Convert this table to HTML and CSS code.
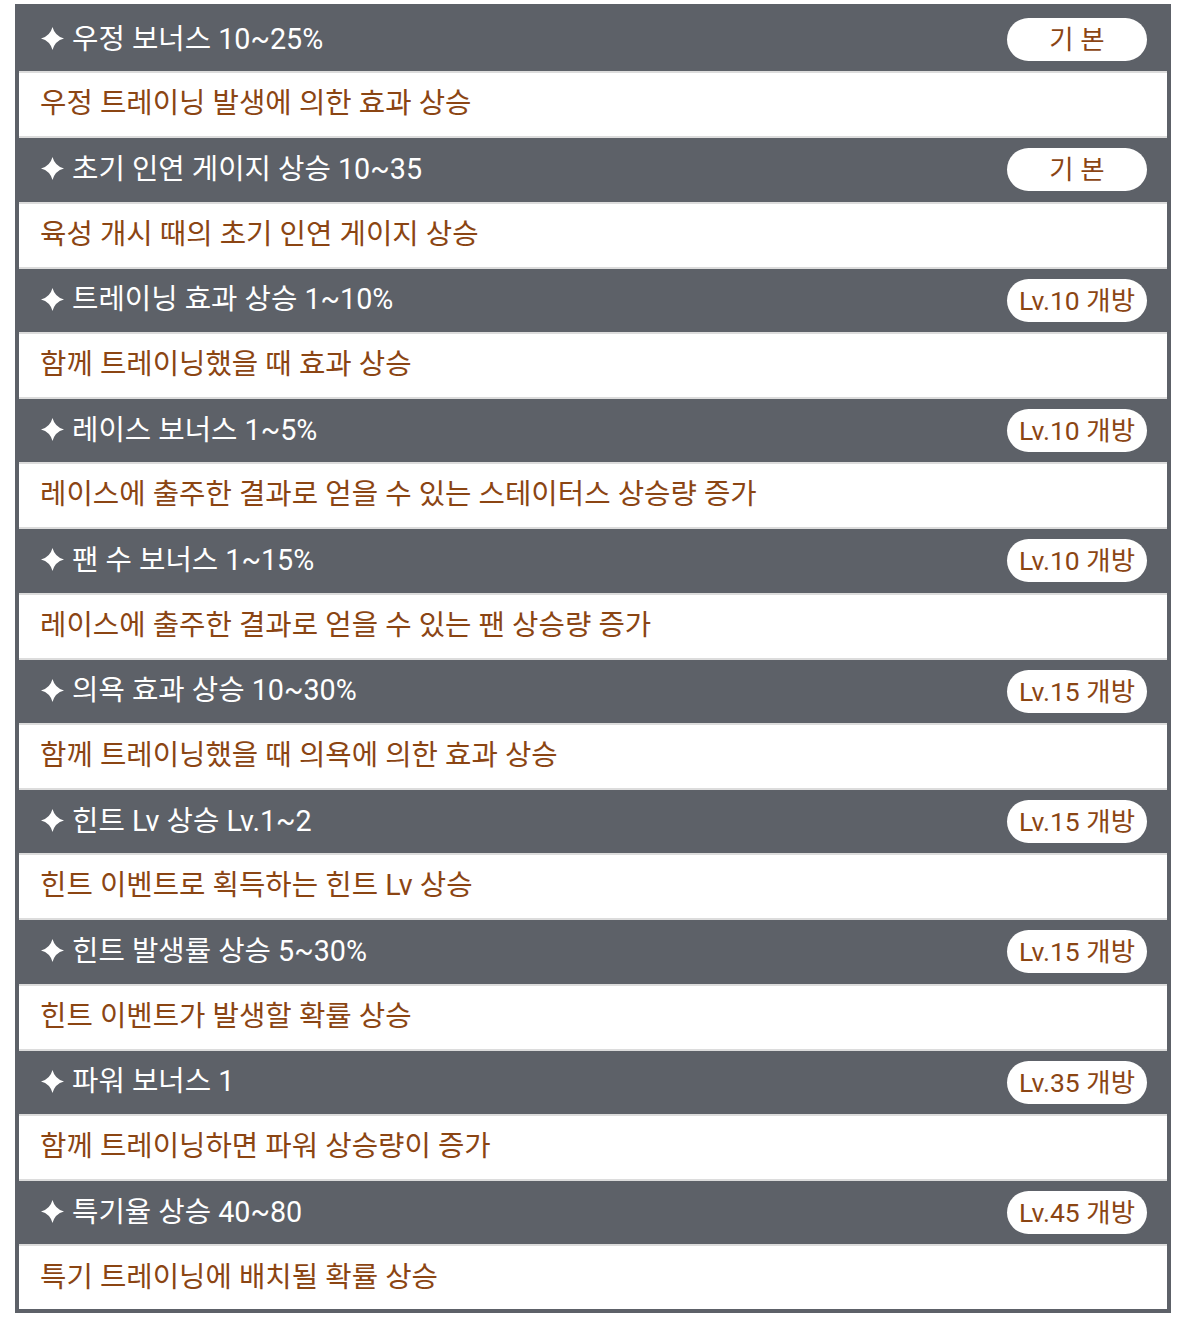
FILE: index.html
```html
<!DOCTYPE html>
<html lang="ko">
<head>
<meta charset="utf-8">
<title>서포트 효과</title>
<link rel="stylesheet" href="styles.css">
</head>
<body>
<div class="panel">
  <div class="head"><div class="title"><svg class="star" viewBox="0 0 24 24"><path d="M12 0Q14.5 9.5 24 12Q14.5 14.5 12 24Q9.5 14.5 0 12Q9.5 9.5 12 0Z"/></svg><span>우정 보너스 10~25%</span></div><span class="badge">기 본</span></div>
  <div class="desc">우정 트레이닝 발생에 의한 효과 상승</div>
  <div class="head"><div class="title"><svg class="star" viewBox="0 0 24 24"><path d="M12 0Q14.5 9.5 24 12Q14.5 14.5 12 24Q9.5 14.5 0 12Q9.5 9.5 12 0Z"/></svg><span>초기 인연 게이지 상승 10~35</span></div><span class="badge">기 본</span></div>
  <div class="desc">육성 개시 때의 초기 인연 게이지 상승</div>
  <div class="head"><div class="title"><svg class="star" viewBox="0 0 24 24"><path d="M12 0Q14.5 9.5 24 12Q14.5 14.5 12 24Q9.5 14.5 0 12Q9.5 9.5 12 0Z"/></svg><span>트레이닝 효과 상승 1~10%</span></div><span class="badge">Lv.10 개방</span></div>
  <div class="desc">함께 트레이닝했을 때 효과 상승</div>
  <div class="head"><div class="title"><svg class="star" viewBox="0 0 24 24"><path d="M12 0Q14.5 9.5 24 12Q14.5 14.5 12 24Q9.5 14.5 0 12Q9.5 9.5 12 0Z"/></svg><span>레이스 보너스 1~5%</span></div><span class="badge">Lv.10 개방</span></div>
  <div class="desc">레이스에 출주한 결과로 얻을 수 있는 스테이터스 상승량 증가</div>
  <div class="head"><div class="title"><svg class="star" viewBox="0 0 24 24"><path d="M12 0Q14.5 9.5 24 12Q14.5 14.5 12 24Q9.5 14.5 0 12Q9.5 9.5 12 0Z"/></svg><span>팬 수 보너스 1~15%</span></div><span class="badge">Lv.10 개방</span></div>
  <div class="desc">레이스에 출주한 결과로 얻을 수 있는 팬 상승량 증가</div>
  <div class="head"><div class="title"><svg class="star" viewBox="0 0 24 24"><path d="M12 0Q14.5 9.5 24 12Q14.5 14.5 12 24Q9.5 14.5 0 12Q9.5 9.5 12 0Z"/></svg><span>의욕 효과 상승 10~30%</span></div><span class="badge">Lv.15 개방</span></div>
  <div class="desc">함께 트레이닝했을 때 의욕에 의한 효과 상승</div>
  <div class="head"><div class="title"><svg class="star" viewBox="0 0 24 24"><path d="M12 0Q14.5 9.5 24 12Q14.5 14.5 12 24Q9.5 14.5 0 12Q9.5 9.5 12 0Z"/></svg><span>힌트 Lv 상승 Lv.1~2</span></div><span class="badge">Lv.15 개방</span></div>
  <div class="desc">힌트 이벤트로 획득하는 힌트 Lv 상승</div>
  <div class="head"><div class="title"><svg class="star" viewBox="0 0 24 24"><path d="M12 0Q14.5 9.5 24 12Q14.5 14.5 12 24Q9.5 14.5 0 12Q9.5 9.5 12 0Z"/></svg><span>힌트 발생률 상승 5~30%</span></div><span class="badge">Lv.15 개방</span></div>
  <div class="desc">힌트 이벤트가 발생할 확률 상승</div>
  <div class="head"><div class="title"><svg class="star" viewBox="0 0 24 24"><path d="M12 0Q14.5 9.5 24 12Q14.5 14.5 12 24Q9.5 14.5 0 12Q9.5 9.5 12 0Z"/></svg><span>파워 보너스 1</span></div><span class="badge">Lv.35 개방</span></div>
  <div class="desc">함께 트레이닝하면 파워 상승량이 증가</div>
  <div class="head"><div class="title"><svg class="star" viewBox="0 0 24 24"><path d="M12 0Q14.5 9.5 24 12Q14.5 14.5 12 24Q9.5 14.5 0 12Q9.5 9.5 12 0Z"/></svg><span>특기율 상승 40~80</span></div><span class="badge">Lv.45 개방</span></div>
  <div class="desc">특기 트레이닝에 배치될 확률 상승</div>
</div>
</body>
</html>
```

FILE: styles.css
```css
html, body {
  margin: 0;
  padding: 0;
  background: #ffffff;
}
body {
  padding: 4px 13px 0 15px;
  font-family: Roboto, "Noto Sans CJK KR", sans-serif;
}
.panel {
  border: 4px solid #5d6168;
  background: #5d6168;
  display: flex;
  flex-direction: column;
}
.head {
  height: 63.33px;
  box-sizing: border-box;
  display: flex;
  align-items: center;
  justify-content: space-between;
  padding: 0 20px 7px 22px;
  color: #ffffff;
  font-size: 28.7px;
}
.title {
  display: flex;
  align-items: center;
  gap: 8px;
}
.star {
  width: 23px;
  height: 23px;
  fill: #ffffff;
  flex: none;
  margin-top: 5px;
}
.badge {
  width: 140px;
  height: 43px;
  border-radius: 22px;
  background: #ffffff;
  color: #8b4513;
  font-size: 26.5px;
  display: flex;
  align-items: center;
  justify-content: center;
  box-sizing: border-box;
  padding-bottom: 4px;
  margin-top: 7px;
}
.desc {
  height: 67px;
  box-sizing: border-box;
  background: #ffffff;
  border-top: 2px solid #dcdcdc;
  border-bottom: 2px solid #dcdcdc;
  display: flex;
  align-items: center;
  padding: 0 0 8px 21px;
  color: #8b4513;
  font-size: 28.7px;
}
.desc:last-child {
  border-bottom: none;
  height: 65px;
  padding-bottom: 6px;
}
```
